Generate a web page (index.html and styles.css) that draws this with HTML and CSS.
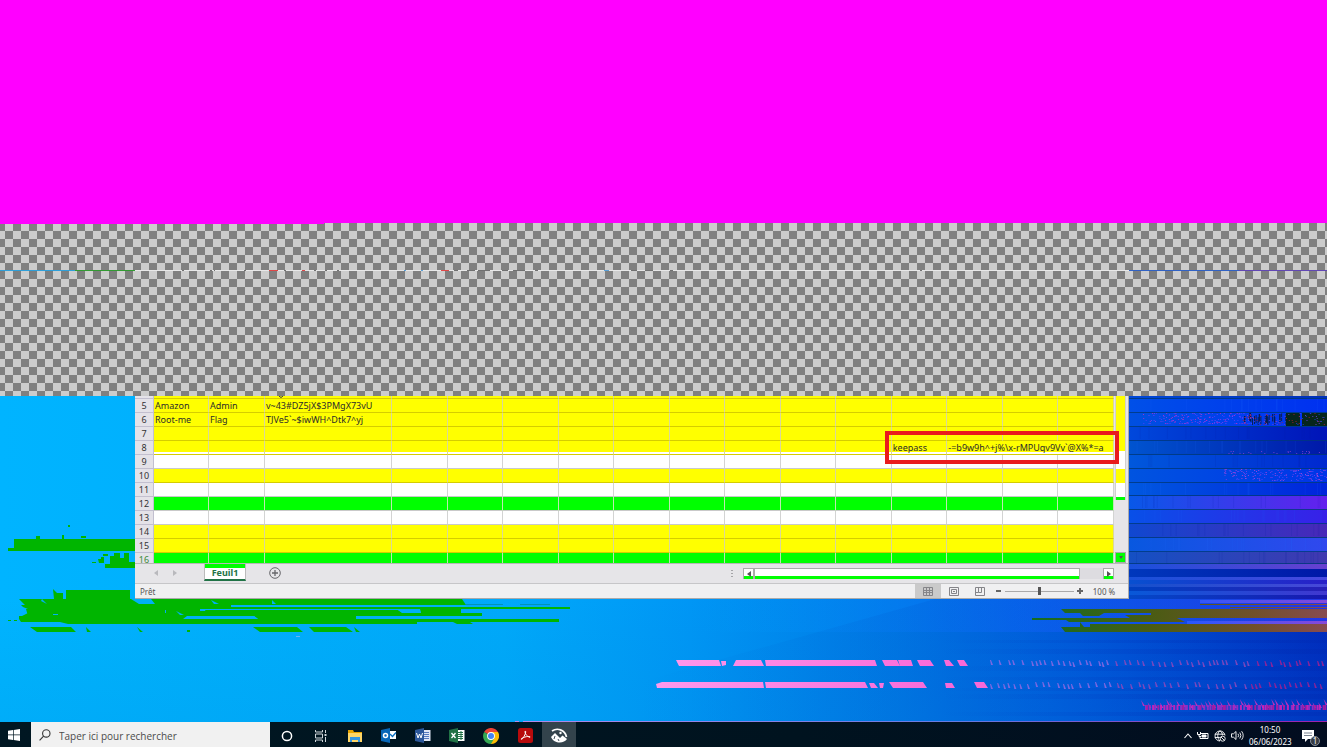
FILE: index.html
```html
<!DOCTYPE html>
<html lang="fr">
<head>
<meta charset="utf-8">
<title>Feuil1</title>
<link rel="stylesheet" href="styles.css">
</head>
<body>
<div class="magenta"></div>
<div class="checker"><div class="seam"></div><svg class="scanline" viewBox="0 0 1327 1" preserveAspectRatio="none" aria-hidden="true">
<path fill="#e8e8e8" d="M135 0h994v1H135z"/><path fill="#2f9fd8" d="M0 0h75v1H0z"/><path fill="#329b32" d="M75 0h60v1H75z"/>
<path fill="#e04848" d="M269 0h9v1h-9zM302 0h3v1h-3zM441 0h8v1h-8z"/><path fill="#5aa0d8" d="M404 0h2v1h-2zM421 0h2v1h-2zM604 0h5v1h-5z"/>
<path fill="#707070" d="M182 0h2v1h-2zM210 0h2v1h-2zM214 0h1v1h-1zM244 0h2v1h-2zM284 0h2v1h-2zM314 0h2v1h-2zM325 0h2v1h-2zM337 0h2v1h-2zM454 0h4v1h-4zM467 0h8v1h-8zM478 0h12v1h-12zM502 0h6v1h-6zM513 0h12v1h-12zM535 0h3v1h-3zM631 0h6v1h-6zM645 0h8v1h-8zM670 0h3v1h-3zM920 0h2v1h-2z"/>
<path fill="#3162c4" d="M1129 0h110v1h-110z"/><path fill="#6248b4" d="M1239 0h88v1h-88z"/></svg></div>
<main class="desktop">
<svg class="wallpaper" viewBox="0 396 1327 326" preserveAspectRatio="none" aria-hidden="true">
<defs>
<linearGradient id="sky"><stop offset="0" stop-color="#00b4ff"/><stop offset=".38" stop-color="#00a9fa"/><stop offset=".52" stop-color="#0096f5"/><stop offset=".68" stop-color="#0078e6"/><stop offset=".82" stop-color="#0056dc"/><stop offset="1" stop-color="#0026bc"/></linearGradient>
<linearGradient id="low" x2="0" y2="1"><stop offset="0" stop-color="#0080c0" stop-opacity="0"/><stop offset="1" stop-color="#0088d8" stop-opacity=".16"/></linearGradient>
<linearGradient id="ray"><stop offset="0" stop-color="#00a8ff" stop-opacity="0"/><stop offset=".5" stop-color="#1068ff" stop-opacity=".5"/><stop offset="1" stop-color="#3838ff" stop-opacity=".7"/></linearGradient>
<linearGradient id="shade"><stop offset="0" stop-color="#0068d0" stop-opacity="0"/><stop offset=".45" stop-color="#0058d0" stop-opacity=".22"/><stop offset="1" stop-color="#0040c0" stop-opacity=".1"/></linearGradient>
<linearGradient id="moss" gradientUnits="userSpaceOnUse" x1="1032" x2="1327"><stop offset="0" stop-color="#146d20"/><stop offset=".4" stop-color="#4a5c13"/><stop offset=".75" stop-color="#70502a"/><stop offset="1" stop-color="#884b50"/></linearGradient>
<linearGradient id="violet"><stop offset="0" stop-color="#2858ff"/><stop offset="1" stop-color="#8848d8"/></linearGradient>
<linearGradient id="pink" gradientUnits="userSpaceOnUse" x1="656" x2="950"><stop offset="0" stop-color="#ff99ec"/><stop offset="1" stop-color="#f869d8"/></linearGradient>
<linearGradient id="edge"><stop offset="0" stop-color="#b68bea"/><stop offset=".55" stop-color="#667be0"/><stop offset="1" stop-color="#a020ac"/></linearGradient>
</defs>
<path fill="url(#sky)" d="M0 396h1327v326H0z"/><path fill="url(#low)" d="M0 600h1327v122H0z"/>
<path fill="url(#ray)" d="M700 599h627v33H700z"/>
<path fill="url(#shade)" d="M935 599h392v123H640v-40z"/>
<g id="bands"></g>
<g fill="#00b500">
<path d="M14 539h121v12H8v-3h6zM36 536h4v3h-4zM62 535h2v4h-2zM81 536h5v2h-5zM68 525h2v2h-2zM105 568v-4h5v-8h4v-3h6v5h4v-5h5v9h6v6zM98 559h3v-2h3v6h-5zM92 562h4v1h-4zM103 554h5v2h-5z"/>
<path d="M53 589l4 4h6v6h-9zM66 590h64v9H66zM19 599h443l4 6H25zM21 605h210v2H23zM23 607h547v2H28zM26 609h174v2h30l-3 5H28zM205 610h193l5 3h79v3H208zM420 609h41v4h-40zM19 616h168l-4 3H19zM28 613h250v3H22zM254 616h102v3h-98zM19 619h540v3H21zM60 622h357v2H68zM453 622h17l3 2h-16zM8 620h3v1H8zM14 620h3v1h-3zM30 627h41l5 5H37zM86 627l5 5h-4zM137 627l6 5h-3zM187 630h3v2h-3zM253 627h44l6 5h-43zM309 627h37l7 5h-39zM354 627l6 5h-4z"/>
</g>
<path fill="#00b0f5" d="M42 599l5 5-6-3zM131 599h20l4 5h-16zM231 605h235l1 2H231zM211 600l8 4h-5zM272 600l4 4h-4zM53 614h5v1h-5zM165 610h1v3h-1zM176 611l8 4h-4zM188 616h66l4 3h-68zM398 610h22l1 3h-19zM356 616h125v3H357z"/>
<path fill="#0093b8" d="M466 604h37v1h-37zM520 604h30v1h-30z"/><path fill="#6cb5ef" d="M296 636h4v1h-4z"/>
<g fill="url(#moss)"><path d="M1061 609h266v4h-262zM1080 613h24l-5 3h-16zM1125 615h26v-2h176v5h-197zM1032 618h145l8 4h-116l-3-2h-34zM1080 622l4 5h6v-3h237v3h-247zM1061 627h266v5h-262zM1200 604h127v1h-127zM1230 607h97v1h-97z"/></g>
<path fill="url(#violet)" d="M1187 621h140v3h-140zM1200 600h127v3h-127z"/>
<path fill="url(#pink)" d="M676 660h43l2 6h-42zM721 661h5v4l-4 1zM736 660h25l3 6h-31zM765 660h110l2 6H766zM882 660h15l3 6h-15zM898 660h13l2 6h-13zM917 660h13l4 6h-14zM944 660h5l5 6h-8zM957 660h7l4 6h-8zM656 684l6-2h101l1 6H657zM765 682h100l3 6H766zM869 683h5l4 5h-7zM879 683h5l-1 5h-3zM889 682h34l4 6h-34zM945 683h7l3 5h-9zM974 682h10l4 6h-11z"/>
<path fill="url(#edge)" d="M515 721h4v1h-4zM523 721h804v1H523z"/>
<g id="specks"></g>
</svg>
<section class="workbook">
<div class="grid-area">
<table class="sheet">
<colgroup><col class="c-head"><col class="c-a"><col class="c-b"><col class="c-c"><col span="13"></colgroup>
<tbody id="rows"></tbody>
</table>
<div class="vscroll"><div class="vthumb"></div><button class="vdown" aria-label="Défiler vers le bas"></button></div>
<div class="highlight"></div>
</div>
<div class="tabs">
<button class="nav" aria-label="Feuille précédente"><svg width="4" height="6"><path d="M4 0v6L0 3z" fill="#b9b9bd"/></svg></button>
<button class="nav" aria-label="Feuille suivante"><svg width="4" height="6"><path d="M0 0v6l4-3z" fill="#b9b9bd"/></svg></button>
<button class="tab">Feuil1</button>
<button class="add" aria-label="Nouvelle feuille"><svg width="12" height="12" fill="none" stroke="#67676b"><circle cx="6" cy="6" r="5.3"/><path d="M6 3v6M3 6h6" stroke-width="1.3"/></svg></button>
<svg class="grip" width="2" height="8" fill="#a5a5a8"><path d="M0 0h2v1H0zM0 3h2v1H0zM0 6h2v1H0z"/></svg>
<div class="hscroll"><button aria-label="Défiler à gauche"><svg width="4" height="6"><path d="M4 0v6L0 3z" fill="#555"/></svg></button><div class="hthumb"></div><button aria-label="Défiler à droite"><svg width="4" height="6"><path d="M0 0v6l4-3z" fill="#555"/></svg></button></div>
</div>
<div class="status"><span class="ready">Prêt</span>
<button class="view on" aria-label="Normal"><svg width="10" height="9" fill="none" stroke="#858589"><path d="M.5.5h9v8h-9zM3.500 0v9M6.500 0v9M0 3.500h10M0 5.500h10"/></svg></button>
<button class="view" aria-label="Mise en page"><svg width="10" height="9" fill="none" stroke="#858589"><path d="M.5.5h9v8h-9zM2.500 2.500h5v4h-5zM4 4.500h2"/></svg></button>
<button class="view" aria-label="Sauts de page"><svg width="10" height="9" fill="none" stroke="#858589"><path d="M.5.5h9v8h-9zM3.500 0v5.500h3V0M.5 5.500h3"/></svg></button>
<button class="step" aria-label="Zoom arrière"><svg width="6" height="6"><path d="M0 2h5v2H0z" fill="#666"/></svg></button><input class="zoom" type="range" aria-label="Zoom" value="50"><button class="step" aria-label="Zoom avant"><svg width="6" height="6"><path d="M0 2h2V0h2v2h2v2H4v2H2V4H0z" fill="#666"/></svg></button><span class="percent">100 %</span></div>
</section>
</main>
<footer class="taskbar">
<button class="start" aria-label="Démarrer"><svg width="12" height="12" fill="#fff"><path d="M0 1.700L5 1v4.600H0zM5.700.9L12 0v5.600H5.700zM0 6.300h5V11l-5-.7zM5.700 6.300H12V12l-6.300-.9z"/></svg></button>
<label class="search"><svg width="12" height="12" fill="none" stroke="#333" stroke-width="1.100"><circle cx="7.300" cy="4.400" r="3.700"/><path d="M4.600 7.100L.6 11.300"/></svg><input type="text" placeholder="Taper ici pour rechercher" aria-label="Taper ici pour rechercher"></label>
<nav class="apps">
<button aria-label="Cortana"><svg width="12" height="12"><circle cx="6" cy="6" r="4.600" fill="none" stroke="#fff" stroke-width="1.500"/></svg></button>
<button aria-label="Affichage des tâches"><svg width="12" height="12" fill="none" stroke="#cfd6da"><path d="M.5 0v2h7V0M.5 12v-2h7v2M.5 4h7v4h-7zM10.500 0v3M10.500 7v5"/><path d="M9.500 5h2" stroke-width="2"/></svg></button>
<button aria-label="Explorateur"><svg width="16" height="14"><path fill="#e8a400" d="M1 1h5l1 2h8v10H1z"/><path fill="#ffd667" d="M1 4h14v9H1z"/><path fill="#3496e2" d="M3 8h10v5h-2v-2H5v2H3z"/></svg></button>
<button aria-label="Outlook"><svg width="16" height="15"><path fill="#0867b8" d="M0 2l9-2v15l-9-2z"/><path fill="#fff" d="M9 3h6v8H9z"/><circle cx="4.500" cy="7.500" r="2" fill="none" stroke="#fff" stroke-width="1.500"/><path d="M9 6l2.500 2.500 3.500-4" stroke="#0a70c4" fill="none" stroke-width="1.300"/></svg></button>
<button aria-label="Word"><svg width="16" height="15"><path fill="#dfe7f5" d="M8 2h7.500v11H8z"/><path d="M9 4.500h5M9 6.500h5M9 8.500h5M9 10.500h5" stroke="#557ac0"/><path fill="#2b579a" d="M0 2l9-2v15l-9-2z"/><path d="M1.500 5L3 10l1.500-4L6 10l1.500-5" stroke="#fff" fill="none"/></svg></button>
<button aria-label="Excel"><svg width="16" height="15"><path fill="#fff" d="M8 2h7.500v11H8z"/><path d="M9 4.500h5M9 6.500h5M9 8.500h5M9 10.500h5M12 3v9" stroke="#217346"/><path fill="#217346" d="M0 2l9-2v15l-9-2z"/><path d="M2.500 5l4 5M6.500 5l-4 5" stroke="#fff" stroke-width="1.300"/></svg></button>
<button aria-label="Chrome"><svg width="16" height="16" viewBox="0 0 16 16"><path fill="#ea4335" d="M8 8L1.100 4A8 8 0 0 1 15 4z"/><path fill="#fbbc05" d="M8 8V4h7A8 8 0 0 1 8 16z"/><path fill="#34a853" d="M8 8l3.500 2L8 16A8 8 0 0 1 1.100 4z"/><circle cx="8" cy="8" r="3.900" fill="#fff"/><circle cx="8" cy="8" r="3" fill="#4285f4"/></svg></button>
<button aria-label="Acrobat"><svg width="15" height="15"><rect width="15" height="15" rx="2.500" fill="#b70b0c"/><path d="M7.300 3c-1 1 .8 5.500 4.700 6.300 1.500-.7-3-1.900-8.500 1.200-.8 1 .2 1.600 1.700-.7C7 7 8.500 3.300 7.300 3z" fill="none" stroke="#fff"/></svg></button>
<button class="active" aria-label="Visionneuse"><svg width="18" height="16" fill="none"><path fill="#fff" d="M1 9l4-4 3 3 2 2 2.500-2.500L17 11c-3 5-13 5-16-2z"/><path stroke="#fff" stroke-width="1.700" d="M2 3C7-.5 15 1.500 16.500 9"/><circle cx="10.500" cy="5" r="1.200" fill="#fff"/><path d="M5 8l-1 3M8 11l1 2" stroke="#41515b"/></svg></button>
</nav>
<div class="tray">
<svg width="8" height="6" fill="none" stroke="#fff" stroke-width="1.100"><path d="M.5 5L4 1l3.500 4"/></svg>
<svg width="12" height="9" fill="none" stroke="#fff"><path d="M4 2.500h7v5H3V5M.5 1v2.500h3V1M2 3.500v2h2"/><path fill="#fff" d="M5 4h4v2H5z"/></svg>
<svg width="12" height="12" fill="none" stroke="#fff" stroke-width=".9"><path d="M11 5.500A5 5 0 1 0 6 11M.8 4.200h10M.8 7.500h5M6 .8C3 3 3 8 6 11M6 .8c2 1.300 2.400 3 2.400 4.500"/><circle cx="8.700" cy="8.700" r="2.500"/><path d="M7 7l3.500 3.500"/></svg>
<svg width="13" height="11" fill="none" stroke="#fff" stroke-width=".9"><path d="M.5 3.800h2L5 1.500v8L2.500 7.200h-2zM7 3.800q1.300 1.700 0 3.400M8.800 2.500q2.200 3 0 6M10.600 1.200q3.200 4.300 0 8.600"/></svg>
<time class="clock"><span>10:50</span><span>06/06/2023</span></time>
<button class="notif" aria-label="Notifications"><svg width="12" height="12"><path fill="#fff" d="M0 0h12v9H6l-3 3V9H0z"/><path d="M2 3h8M2 5.500h8" stroke="#7a8391"/></svg><span class="badge">1</span></button>
</div>
</footer>
<script src="desk.js"></script>
</body>
</html>
```
FILE: styles.css
```css
*{box-sizing:border-box}
html,body{height:100%}
body{margin:0;display:flex;flex-direction:column;overflow:hidden;font-family:"Noto Sans","Open Sans",sans-serif;font-size:9px;color:#2b2b2b}
button{border:0;padding:0;margin:0;background:none;font:inherit;color:inherit;display:flex;align-items:center;justify-content:center}
svg{display:block;flex:none}
.magenta{flex:223 0 0;background:#f0f}
.checker{flex:173 0 0;background:repeating-conic-gradient(#808080 0 25%,#ccc 0 50%) 5px 0/16px 16px}
.seam{height:1px;width:324px;background:#f0f}
.scanline{width:100%;height:1px;margin-top:46px}
.desktop{flex:326 0 0;min-height:0;position:relative;background:#00a8f8}
.wallpaper{position:absolute;inset:0;width:100%;height:100%}
.workbook{position:relative;margin:0 198px 0 135px;background:#e6e5e8;border:solid #aaa;border-width:0 1px 1px 0}
.grid-area{display:flex;position:relative;height:168px;overflow:hidden;border-bottom:1px solid #b8b8b8}
.sheet{flex:1;width:0;table-layout:fixed;border-collapse:separate;border-spacing:0;align-self:flex-start}
.c-head{width:19px}.c-a{width:55px}.c-b{width:56px}.c-c{width:127px}
.sheet th,.sheet td{height:14px;line-height:13px;padding:0 0 0 1px;border-right:1px solid #d3d3d3;border-bottom:1px solid #c9c9c9;white-space:nowrap;text-align:left;font-weight:400}
.sheet td{background:#fff}
.sheet th{padding:0;text-align:center;background:#e4e2e8;border-color:#c2bfcf;color:#333}
.sheet .cut th,.sheet .cut td{height:3px;line-height:0}
.sheet .last th,.sheet .last td{height:13px}
.sheet .last th{color:#3b8a3b}
.cut svg{margin-left:12px}
.sheet .yellow td{background:#ff0;border-color:#d9d79a;border-bottom-color:#d5cd00}
.sheet .green td{background:#0f0;border-right-color:#bde8b0}
.sheet .eight td{background:linear-gradient(#ff0 11px,#fff 11px)}
.vscroll{width:14px;padding:0 2px 0 1px;background:#e6e5e8;display:flex;flex-direction:column;justify-content:space-between}
.vthumb{height:104px;border:solid #d0d0d0;border-width:0 1px;background:linear-gradient(#ff0 55px,#fff 55px 73px,#ff0 73px 87px,#fff 87px 101px,#0f0 101px)}
.vdown{height:11px;background:#0f0;border:1px solid #aaa}
.vdown::after{content:"";border:2px solid transparent;border-top:3px solid #555;border-bottom:0}
.highlight{position:absolute;right:9px;top:35px;width:234px;height:33px;border:4px solid #e91b1d}
.tabs{height:20px;display:flex;align-items:flex-start;padding-right:14px;border-bottom:1px solid #c6c6c8}
.nav{width:18px;height:18px;margin-left:1px}.nav:first-child{margin-left:12px}
.tab{width:42px;height:17px;padding-top:2px;margin:0 23px 0 20px;font-weight:700;font-size:9px;color:#237345;background:linear-gradient(#0f0 4px,#fff 4px);border:solid #bbb;border-width:0 1px;border-bottom:2px solid #217346}
.add{height:18px}
.grip{margin:6px 10px 0 auto}
.hscroll{width:371px;height:11px;margin-top:4px;display:flex;background:#dddce0}
.hscroll button,.hthumb{background:linear-gradient(#fff 7px,#0f0 7px);border:1px solid #aaa;border-bottom-width:0;width:11px}
.hscroll .hthumb{width:326px;margin-right:auto}
.status{height:14px;display:flex;align-items:center;background:#f0f0f1;font-size:8px;color:#555}
.ready{margin:0 auto 0 5px}
.view{width:26px;height:14px}.view.on{background:#cacaca}
.step{width:12px;height:12px}
.zoom{appearance:none;width:69px;height:12px;margin:0;background:linear-gradient(#aaa,#aaa) center/100% 1px no-repeat}
.zoom::-webkit-slider-thumb{appearance:none;width:3px;height:8px;background:#555}
.percent{width:36px;text-align:center;margin-right:6px}
.taskbar{height:25px;flex:none;display:flex;background:linear-gradient(90deg,#001722,#00131f 60%,#020d20);color:#fff;position:relative}
.start{width:27px;margin-right:4px}
.search{width:239px;height:25px;background:#f1f1f1;display:flex;align-items:center;padding-left:8px;gap:8px}
.search input{flex:1;min-width:0;border:0;background:none;outline:0;padding:2px 0 0;font:10px "Open Sans","Noto Sans",sans-serif;color:#555}
.search input::placeholder{color:#4b4b4b;opacity:1}
.apps{display:flex}
.apps button{width:34px;padding-top:2px}.apps .active{background:#33434c}
.tray{margin-left:auto;display:flex;align-items:center;gap:5px;padding:2px 7px 0 0}
.clock{display:flex;flex-direction:column;text-align:center;line-height:12px;font-size:8px;width:42px}
.notif{position:relative;width:18px;height:23px;justify-content:flex-start;margin-left:6px}
.badge{position:absolute;right:0;bottom:1px;width:10px;height:10px;border-radius:50%;background:#363b43;border:1px solid #88909a;font-size:8px;line-height:8px;text-align:center}
```
FILE: desk.js
```js
const tail = '<svg width="6" height="2"><path d="M1 0q2 3 4 0" fill="none" stroke="#333"/></svg>';
const rows = [
  ['', 'cut yellow', ['', '', tail]],
  [5, 'yellow', ['Amazon', 'Admin', 'v~43#DZ5jX$3PMgX73vU']],
  [6, 'yellow', ['Root-me', 'Flag', 'TJVe5`~$iwWH^Dtk7^yj']],
  [7, 'yellow', []], [8, 'yellow eight', []], [9, '', []],
  [10, 'yellow', []], [11, '', []], [12, 'green', []], [13, '', []],
  [14, 'yellow', []], [15, 'yellow', []], [16, 'green last', []]
];
document.getElementById('rows').innerHTML = rows.map(([n, cls, cells]) => {
  let html = '';
  for (let i = 0; i < 16; i++) {
    if (n === 8 && i === 12) html += '<td>keepass</td>';
    else if (n === 8 && i === 13) { html += '<td colspan="3">-=b9w9h^+j%\\x-rMPUqv9Vv`@X%*=a</td>'; break; }
    else html += `<td>${cells[i] || ''}</td>`;
  }
  return `<tr class="${cls}"><th scope="row">${n}</th>${html}</tr>`;
}).join('');

// Deterministic noise for the corrupted wallpaper.
let seed = 77;
const rnd = () => (seed = (seed * 1664525 + 1013904223) >>> 0) / 4294967296;
const rect = (x, y, w, h, f, o = 1) => `<rect x="${x.toFixed(1)}" y="${y}" width="${w}" height="${h}" fill="${f}" opacity="${o}"/>`;
const bands = [
  [396, 3, '#0048d8', '#0030b8'], [399, 14, '#0050e8', '#0030f0'], [413, 14, '#0050e0', '#0030f8'],
  [427, 14, '#0048dc', '#0014b8'], [441, 14, '#0054d0', '#0018a8'], [455, 14, '#0058dc', '#0028d0'],
  [469, 14, '#0054e0', '#0034e8'], [483, 13, '#0058e0', '#0024dc'], [496, 14, '#0858e8', '#6420ee'],
  [510, 14, '#0850e8', '#3820e8'], [524, 14, '#1048d0', '#4828b8'], [538, 14, '#0858e0', '#3048ee'],
  [552, 12, '#1450c4', '#4038b0'], [564, 5, '#1850dc', '#6840d0'], [569, 8, '#0038bc', '#0018a8'],
  [577, 3, '#1850d8', '#4848e0'], [580, 4, '#0850d0', '#2820c8'], [584, 3, '#1450cc', '#4848d8'],
  [587, 4, '#0040c0', '#2820b8'], [591, 4, '#0858d8', '#4038d0'], [595, 4, '#0448c8', '#1818b0']
];
let out = '<defs>';
bands.forEach((b, i) => { out += `<linearGradient id="band${i}"><stop stop-color="${b[2]}"/><stop offset="1" stop-color="${b[3]}"/></linearGradient>`; });
out += '</defs>';
bands.forEach((b, i) => {
  out += rect(1129, b[0], 198, b[1], `url(#band${i})`);
  if (i < 13) out += rect(1129, b[0] + b[1] - 1, 198, 1, '#003878', .8);
});
const tops = [399, 427, 441, 455, 483, 496, 510, 524, 538, 552];
for (let i = 0; i < 170; i++) out += rect(1135 + rnd() * 192, tops[i % 10], 1, 12, i % 2 ? '#0020a0' : '#2068ff', .12);
out += '<linearGradient id="streak"><stop stop-color="#0028b0" stop-opacity="0"/><stop offset="1" stop-color="#0028b0"/></linearGradient>';
[[640, 3], [649, 5], [666, 5], [677, 3], [688, 3], [694, 5], [712, 4]].forEach(([y, h]) => { out += rect(940, y, 387, h, 'url(#streak)', .3); });
document.getElementById('bands').innerHTML = out;

let specks = '';
const scatter = (count, x, y, w, h, colors) => {
  for (let i = 0; i < count; i++) specks += rect(x + rnd() * w, Math.floor(y + rnd() * h), 1, 1, colors[i % colors.length], .85);
};
for (let i = 0; i < 28; i++) specks += rect(1242 + rnd() * 46, 413 + Math.floor(rnd() * 5), 1, 8, '#071d45', .9);
specks += rect(1286, 413, 14, 13, '#06261d') + rect(1302, 413, 25, 13, '#06261d');
scatter(190, 1143, 413, 110, 11, ['#8040f0', '#b430c8', '#5040ff']);
scatter(100, 1242, 413, 82, 12, ['#b02030', '#7440e0', '#2040e0']);
scatter(190, 1224, 469, 103, 12, ['#7840e8', '#b048d8', '#5048ff']);
scatter(24, 1220, 451, 107, 3, ['#8040d0']);
for (const y of [660, 682]) {
  for (let x = 990; x < 1325; x += 3 + rnd() * 7) {
    const c = x > 1250 ? '#a32092' : x > 1110 ? '#9148bb' : '#9068e2';
    specks += `<path d="M${x.toFixed(1)} ${y + Math.floor(rnd() * 3)}h1l2 5h-2z" fill="${c}" opacity=".85"/>`;
  }
}
for (let x = 1141; x < 1325; x += 3 + rnd() * 4) specks += `<path d="M${x.toFixed(1)} ${699 + Math.floor(rnd() * 4)}l4 6h-2z" fill="#b830c0"/>`;
for (let x = 1145; x < 1325; x += 1 + rnd() * 3) specks += rect(x, 705, 2, 5, ['#d020b8', '#982cc4', '#b018a0'][Math.floor(rnd() * 3)], .9);
document.getElementById('specks').innerHTML = specks;
```
